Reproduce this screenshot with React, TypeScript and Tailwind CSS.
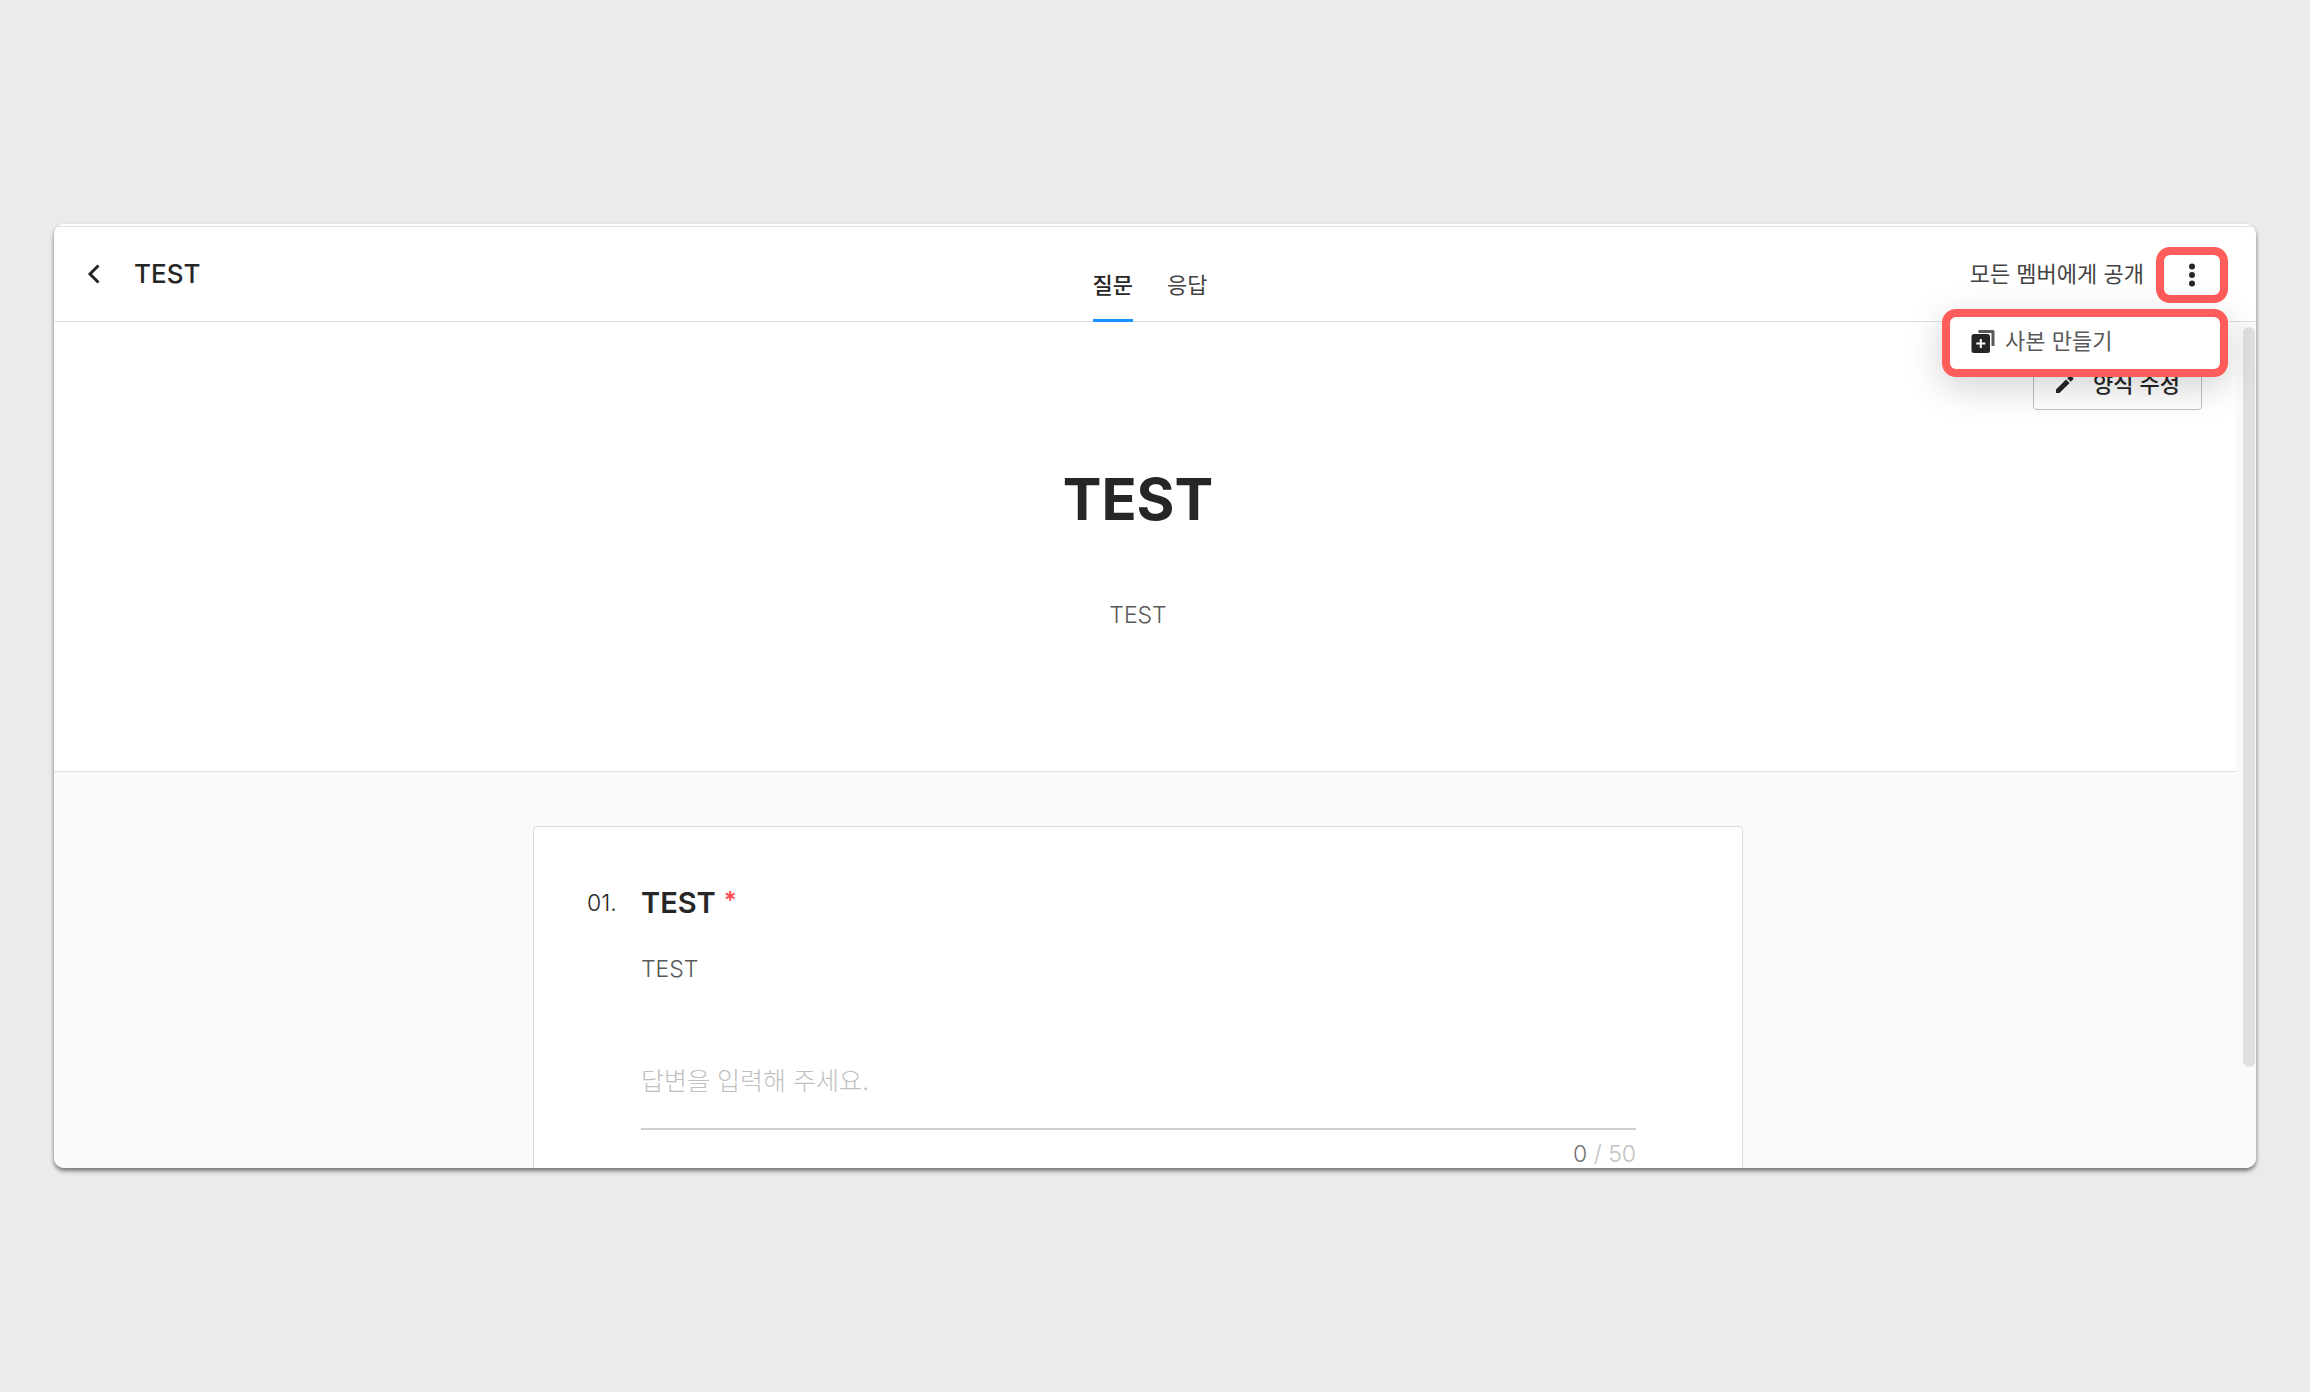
import { useState } from "react";

function ChevronLeftIcon() {
  return (
    <svg width="24" height="24" viewBox="0 0 24 24" fill="none" stroke="#262626" strokeWidth="3" aria-hidden="true">
      <path d="M16.5 3.5 8 12l8.500 8.500" />
    </svg>
  );
}

function MoreIcon() {
  return (
    <svg width="8" height="26" viewBox="0 0 8 26" fill="#262626" aria-hidden="true">
      <circle cx="4" cy="4.500" r="3" />
      <circle cx="4" cy="13" r="3" />
      <circle cx="4" cy="21.500" r="3" />
    </svg>
  );
}

function DuplicateIcon() {
  return (
    <svg width="24" height="24" viewBox="0 0 24 24" fill="none" aria-hidden="true">
      <path d="M7.500 2.500H22V17" stroke="#595959" strokeWidth="3" strokeLinejoin="round" />
      <rect x="0.500" y="5" width="18.500" height="19" rx="2.500" fill="#262626" />
      <path d="M9.800 10V19M5.300 14.500H14.300" stroke="#fff" strokeWidth="2" />
    </svg>
  );
}

function PencilIcon() {
  return (
    <svg width="20" height="20" viewBox="0 0 20 20" fill="#262626" aria-hidden="true">
      <path d="M1 15.500V19h3.500L14.600 8.900 11.100 5.400zM12.200 4.300l3.500 3.500 2.500-2.500a1 1 0 0 0 0-1.400L16.100 1.800a1 1 0 0 0-1.400 0z" />
    </svg>
  );
}

function Header() {
  return (
    <header className="mt-0.5 grid h-24 shrink-0 grid-cols-[1fr_auto_1fr] border-t border-b border-[#e0e0e0] pr-7 pl-[18px]">
      <div className="flex items-center gap-[18px]">
        <button type="button" aria-label="뒤로" className="flex h-11 w-11 items-center justify-center">
          <ChevronLeftIcon />
        </button>
        <h1 className="text-[26px] leading-8 font-medium text-[#262626]">TEST</h1>
      </div>
      <nav className="-mb-px flex gap-[34px] text-[22px] leading-8">
        <a href="#questions" aria-current="page" className="flex items-end border-b-3 border-[#1890ff] pb-[18px] font-medium text-[#262626]">
          질문
        </a>
        <a href="#responses" className="flex items-end border-b-3 border-transparent pb-[18px] text-[#434343]">
          응답
        </a>
      </nav>
      <div className="flex items-center justify-end gap-3">
        <span className="text-[22px] leading-8 text-[#434343]">모든 멤버에게 공개</span>
        <div className="relative pt-0.5">
          <button type="button" aria-label="더보기" aria-expanded="true" className="flex h-14 w-[72px] items-center justify-center rounded-[14px] border-8 border-[#ff5c5c] bg-white">
            <MoreIcon />
          </button>
          <div role="menu" className="absolute top-full right-0 z-10 mt-1.5 w-[286px] rounded-[14px] border-8 border-[#ff5c5c] bg-white shadow-[0_10px_36px_rgba(0,0,0,0.18)]">
            <button type="button" role="menuitem" className="flex h-[52px] w-full items-center gap-2.5 pb-1 pl-[21px] text-[22px] leading-8 text-[#595959]">
              <DuplicateIcon />
              사본 만들기
            </button>
          </div>
        </div>
      </div>
    </header>
  );
}

function Hero() {
  return (
    <section className="relative h-[450px] shrink-0 border-b border-[#e0e0e0] bg-white pt-[139px] pr-3.5 text-center">
      <button type="button" className="absolute top-[35px] right-[34px] flex h-[53px] w-[169px] items-center justify-center gap-[18px] rounded border border-[#bfbfbf] bg-white text-[22px] leading-8 font-medium text-[#262626]">
        <PencilIcon />
        양식 수정
      </button>
      <h2 className="text-[58px] leading-[76px] font-bold text-[#262626]">TEST</h2>
      <p className="mt-[62px] text-[23px] leading-8 font-light text-[#595959]">TEST</p>
    </section>
  );
}

function QuestionCard() {
  const [answer, setAnswer] = useState("");
  return (
    <article className="mx-auto flex w-full max-w-[1210px] shrink-0 rounded border border-[#dcdcdc] bg-white pt-[54px] pr-[106px] pb-14 pl-[53px]">
      <span className="w-[54px] shrink-0 pt-1.5 text-[23px] leading-8 font-light text-[#262626]">01.</span>
      <div className="min-w-0 flex-1">
        <label htmlFor="answer" className="flex gap-2 text-[29px] leading-[44px] font-semibold text-[#262626]">
          TEST
          <span className="text-2xl leading-10 text-[#ff4d4f]">*</span>
        </label>
        <p className="mt-7 text-[23px] leading-8 font-light text-[#595959]">TEST</p>
        <input
          id="answer"
          type="text"
          maxLength={50}
          value={answer}
          onChange={(e) => setAnswer(e.target.value)}
          placeholder="답변을 입력해 주세요."
          className="mt-12 h-[97px] w-full border-b-2 border-[#d0d0d0] bg-transparent text-[25px] font-light text-[#262626] outline-none placeholder:text-[#bfbfbf]"
        />
        <p className="mt-2 text-right text-[23px] leading-8 font-light text-[#bfbfbf]">
          <span className="text-[#737373]">{answer.length}</span> / 50
        </p>
      </div>
    </article>
  );
}

export default function App() {
  return (
    <div className="flex h-screen flex-col bg-[#ebebeb] px-[54px] py-56 font-['Inter','Noto_Sans_CJK_KR',sans-serif]">
      <div className="flex min-h-0 flex-1 flex-col overflow-hidden rounded-[10px] bg-white shadow-[0_3px_4px_rgba(0,0,0,0.5)]">
        <Header />
        <div className="flex min-h-0 flex-1">
          <main className="flex min-w-0 flex-1 flex-col overflow-hidden bg-[#fafafa]">
            <Hero />
            <div className="pt-[54px] pr-3.5">
              <QuestionCard />
            </div>
          </main>
          <div className="w-5 bg-[#fafafa] pt-[5px] pl-[7px]" aria-hidden="true">
            <div className="h-[88%] w-3 rounded-full bg-[#e0e0e0]" />
          </div>
        </div>
      </div>
    </div>
  );
}
